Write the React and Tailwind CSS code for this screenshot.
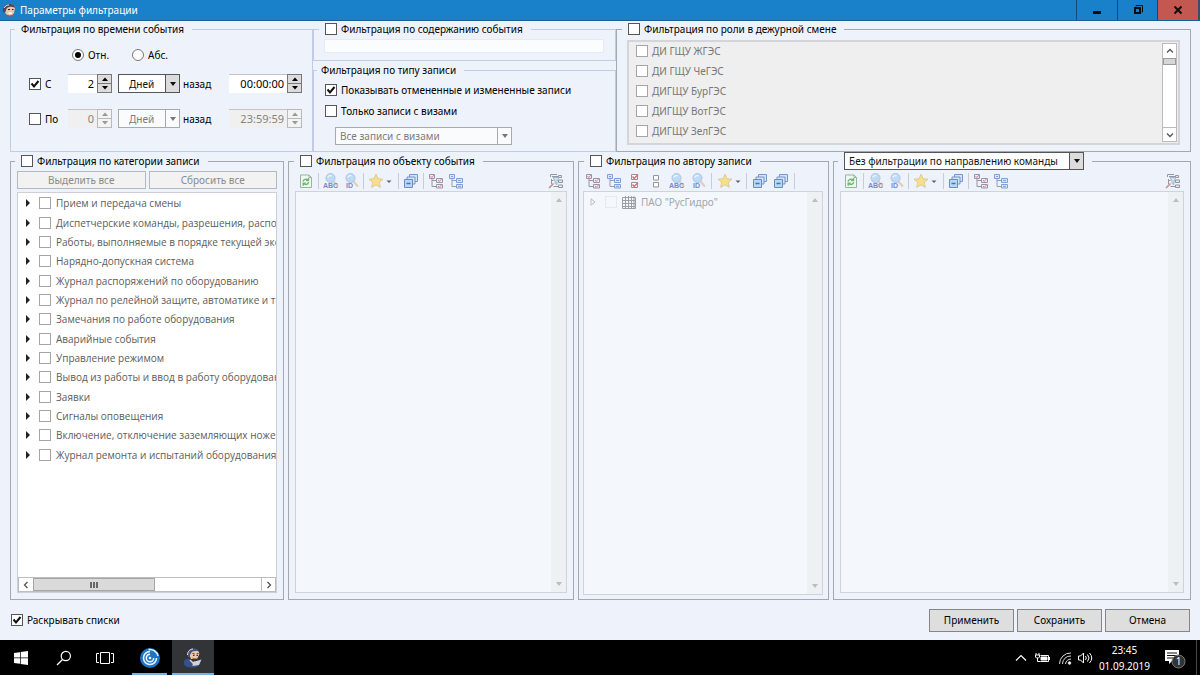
import React from 'react';

const CATEGORIES = [
  'Прием и передача смены',
  'Диспетчерские команды, разрешения, распоряжения',
  'Работы, выполняемые в порядке текущей эксплуатации',
  'Нарядно-допускная система',
  'Журнал распоряжений по оборудованию',
  'Журнал по релейной защите, автоматике и телемеханике',
  'Замечания по работе оборудования',
  'Аварийные события',
  'Управление режимом',
  'Вывод из работы и ввод в работу оборудования',
  'Заявки',
  'Сигналы оповещения',
  'Включение, отключение заземляющих ножей',
  'Журнал ремонта и испытаний оборудования',
];

const ROLES = ['ДИ ГЩУ ЖГЭС', 'ДИ ГЩУ ЧеГЭС', 'ДИГЩУ БурГЭС', 'ДИГЩУ ВотГЭС', 'ДИГЩУ ЗелГЭС'];

function Check({ muted, faint, ...props }) {
  const border = faint ? 'border-[#e6eaee]' : muted ? 'border-[#a5a5a5]' : 'border-[#555]';
  return (
    <span className="grid size-3 shrink-0">
      <input
        type="checkbox"
        className={`peer col-start-1 row-start-1 m-0 size-3 appearance-none border ${border} ${faint ? 'bg-transparent' : 'bg-white'}`}
        {...props}
      />
      <svg viewBox="0 0 12 12" className="pointer-events-none invisible col-start-1 row-start-1 size-3 peer-checked:visible" fill="none" stroke="#111" strokeWidth="2">
        <path d="M2.5 5.5 5 8.5 9.5 3" />
      </svg>
    </span>
  );
}

function CheckLabel({ children, className = 'gap-1', ...props }) {
  return (
    <label className={`flex items-center whitespace-nowrap ${className}`}>
      <Check {...props} />
      <span>{children}</span>
    </label>
  );
}

function Radio({ children, ...props }) {
  return (
    <label className="flex items-center gap-1">
      <span className="grid size-3">
        <input type="radio" name="time-mode" className="peer col-start-1 row-start-1 m-0 size-3 appearance-none rounded-full border border-[#777] bg-white" {...props} />
        <span className="pointer-events-none invisible col-start-1 row-start-1 size-1.5 place-self-center rounded-full bg-black peer-checked:visible" />
      </span>
      {children}
    </label>
  );
}

function Spinner({ label, value, width, disabled }) {
  const btn = disabled
    ? 'border-[#b9b9b9] bg-[#f3f3f3] text-[#999]'
    : 'border-[#777] bg-[#dcdcdc] text-black';
  return (
    <div className={`flex h-[19px] ${width}`}>
      <input
        type="text"
        aria-label={label}
        defaultValue={value}
        disabled={disabled}
        className={`min-w-0 flex-1 border-t border-[#c4c4c4] pr-[3px] text-right text-[11px] leading-[18px] ${disabled ? 'bg-[#f0f0f0] text-[#838383]' : 'bg-white text-black'}`}
      />
      <div className="flex w-[15px] flex-col">
        <button aria-label={`${label}: больше`} disabled={disabled} className={`grid flex-1 place-items-center border ${btn}`}>
          <svg viewBox="0 0 8 4" className="h-1 w-2"><path d="M1 4 4 .5 7 4z" fill="currentColor" /></svg>
        </button>
        <button aria-label={`${label}: меньше`} disabled={disabled} className={`grid flex-1 place-items-center border border-t-0 ${btn}`}>
          <svg viewBox="0 0 8 4" className="h-1 w-2"><path d="M1 0 4 3.5 7 0z" fill="currentColor" /></svg>
        </button>
      </div>
    </div>
  );
}

function Select({ label, value, className, textClass, disabled }) {
  const border = disabled ? 'border-[#a9a9a9]' : 'border-[#555]';
  return (
    <div className={`grid border ${border} ${disabled ? 'bg-[#fafbfc]' : 'bg-white'} ${className}`}>
      <select aria-label={label} disabled={disabled} className={`col-start-1 row-start-1 w-full appearance-none bg-transparent opacity-100 ${disabled ? 'text-[#7c7c7c]' : 'text-[#111]'} ${textClass}`}>
        <option>{value}</option>
      </select>
      <span className={`pointer-events-none col-start-1 row-start-1 grid w-[14px] place-items-center justify-self-end border-l ${border} ${disabled ? '' : 'bg-[#dcdcdc]'}`}>
        <svg viewBox="0 0 6 4" className="h-1 w-1.5"><path d="M0 0H6L3 4z" fill={disabled ? '#777' : '#111'} /></svg>
      </span>
    </div>
  );
}

function Group({ legend, tone = 'border-[#a3a9b3]', legendClass = 'h-4', className = '', children }) {
  return (
    <fieldset className={`flex min-w-0 flex-col border ${tone} ${className}`}>
      <legend className={`flex items-center whitespace-nowrap pr-2 ${legendClass}`}>{legend}</legend>
      {children}
    </fieldset>
  );
}

/* Toolbar icons */

function Icon({ children }) {
  return <svg viewBox="0 0 16 16" className="size-4" fill="none">{children}</svg>;
}

const RefreshIcon = () => (
  <Icon>
    <path d="M2.500 2h8.500l2.500 2.500V14.500h-11z" fill="#f1f8f1" stroke="#8fae91" />
    <path d="M11 2v2.500h2.500" stroke="#8fae91" />
    <path d="M5 8.500C5.500 6.300 8.200 5.500 10 7M10.500 5v2.500H8M10.700 9.300c-.6 2.200-3.300 2.900-5.100 1.300M5.200 12.800v-2.500h2.500" stroke="#62b266" strokeWidth="1.400" />
  </Icon>
);

const FindIcon = ({ text }) => (
  <Icon>
    <path d="m10 8 5 5.500" stroke="#e0cda4" strokeWidth="2" />
    <circle cx="7.500" cy="5" r="4.500" fill="#b9d9f6" stroke="#a6c1e6" />
    <path d="M4.800 4.500C5.300 3 6.800 2.300 8.500 2.800" stroke="#eef8ff" strokeWidth="1.400" />
    <text x={text === 'ID' ? 3 : 0} y="15" fontSize="7" fontWeight="bold" fill="#7079cc" fontFamily="Liberation Sans, sans-serif">{text}</text>
  </Icon>
);

const StarIcon = () => (
  <svg viewBox="0 0 24 16" className="h-4 w-6" fill="none">
    <path d="m8 1.200 2 4.600 5 .4-3.800 3.300 1.200 4.900L8 11.800l-4.400 2.600 1.200-4.900L1 6.200l5-.4z" fill="#f8df7d" stroke="#dcc78f" />
    <path d="M18.500 7.500h5L21 10z" fill="#555" />
  </svg>
);

const WindowsIcon = () => (
  <Icon>
    <path d="M6.500 1.500h8v7h-8z" fill="#cfe2fb" stroke="#6a8cc9" />
    <path d="M4 4h8v7H4z" fill="#cfe2fb" stroke="#6a8cc9" />
    <path d="M1.500 6.500h8v8h-8z" fill="#b4d3fa" stroke="#5a80c4" />
    <path d="M3.500 10.500h4" stroke="#3a61ab" strokeWidth="1.500" />
  </Icon>
);

const TreeIcon = () => (
  <Icon>
    <path d="M4 5v8.500h4.500M4 7.500h4.500" stroke="#8c97a8" />
    <path d="M1.500 1.500h5v4h-5zM8.500 5.500h6v4h-6zM8.500 11.500h6v3.500h-6z" fill="#d6e6fb" stroke="#7297d6" />
    <path d="M3 3.500h2M10 7.500h3M10 13.300h3" stroke="#7297d6" />
  </Icon>
);

const CheckedTreeIcon = () => (
  <Icon>
    <path d="M4 5v8.500h4.500M4 7.500h4.500" stroke="#8c8c98" />
    <path d="M1.500 1.500h5v4h-5zM8.500 5.500h6v4h-6zM8.500 11.500h6v3.500h-6z" fill="#f4eaf1" stroke="#8f8aa4" />
    <path d="m2.500 3 1.300 1.500L6 2M10 7l1.300 1.500L13.500 6M10 13l1.300 1.300L13.500 12" stroke="#cf7a85" />
  </Icon>
);

const CheckAllIcon = () => (
  <Icon>
    <path d="M4.500 1.500h6v5h-6zM4.500 9.500h6v5h-6z" fill="#fff" stroke="#8b8b8b" />
    <path d="m5.500 3.500 1.700 2L11 1.500M5.500 11.500l1.700 2L11 9.500" stroke="#d9626b" strokeWidth="1.500" />
  </Icon>
);

const UncheckAllIcon = () => (
  <Icon><path d="M5.500 2.500h5v4.500h-5zM5.500 9.500h5V14h-5z" fill="#fff" stroke="#8b8b8b" /></Icon>
);

const FilterTreeIcon = () => (
  <Icon>
    <path d="M2.500 4V1.500H9M4 3.500h6M3.500 6v5M3.500 7.500h2" stroke="#8b9098" />
    <path d="M10.500 2.500h3v2h-3zM10.500 7h4v2.500h-4zM10.500 12h4v2.500h-4z" fill="#e9eaec" stroke="#868b93" />
    <path d="M5 4.500h6L9 8v3.500l-2-1V8z" fill="#cfe3f3" stroke="#9bb0c4" />
    <path d="m1 15 4.500-4.500" stroke="#c08a82" strokeWidth="1.700" />
    <path d="M5.500 13.500h5" stroke="#868b93" />
  </Icon>
);

function Tool({ label, children, size = 'w-4' }) {
  return <button aria-label={label} className={`flex h-4 shrink-0 items-center opacity-90 ${size}`}>{children}</button>;
}

const Divider = () => <span className="h-4 w-px shrink-0 bg-[#c9ccd2]" />;

function ObjectToolbar() {
  return (
    <div className="flex h-[21px] items-center gap-1 px-[3px]">
      <Tool label="Обновить"><RefreshIcon /></Tool>
      <Divider />
      <Tool label="Поиск по тексту"><FindIcon text="ABC" /></Tool>
      <Tool label="Поиск по ID"><FindIcon text="ID" /></Tool>
      <Divider />
      <Tool label="Избранное" size="w-[26px]"><StarIcon /></Tool>
      <Divider />
      <Tool label="Окна"><WindowsIcon /></Tool>
      <Divider />
      <Tool label="Выбрать ветвь"><CheckedTreeIcon /></Tool>
      <Tool label="Снять ветвь"><TreeIcon /></Tool>
      <span className="flex-1" />
      <Tool label="Фильтр дерева"><FilterTreeIcon /></Tool>
    </div>
  );
}

function AuthorToolbar() {
  return (
    <div className="flex h-[21px] items-center gap-[5px] pl-0.5">
      <Tool label="Выбрать ветвь"><CheckedTreeIcon /></Tool>
      <Tool label="Снять ветвь"><TreeIcon /></Tool>
      <Tool label="Отметить все"><CheckAllIcon /></Tool>
      <Tool label="Снять все"><UncheckAllIcon /></Tool>
      <Tool label="Поиск по тексту"><FindIcon text="ABC" /></Tool>
      <Tool label="Поиск по ID"><FindIcon text="ID" /></Tool>
      <Divider />
      <Tool label="Избранное" size="w-6"><StarIcon /></Tool>
      <Divider />
      <Tool label="Развернуть"><WindowsIcon /></Tool>
      <Tool label="Свернуть"><WindowsIcon /></Tool>
      <Divider />
    </div>
  );
}

function TreePane({ children }) {
  return (
    <div className="flex min-h-0 flex-1 border border-[#cfd4da] bg-[#f4f8fc]">
      <div className="min-w-0 flex-1">{children}</div>
      <div className="flex w-[15px] flex-col items-center justify-between bg-[#eef1f4] py-1.5">
        <svg viewBox="0 0 6 4" className="h-1 w-1.5"><path d="M0 4H6L3 0z" fill="#b9bdc2" /></svg>
        <svg viewBox="0 0 6 4" className="h-1 w-1.5"><path d="M0 0H6L3 4z" fill="#b9bdc2" /></svg>
      </div>
    </div>
  );
}

function Chevron({ d }) {
  return <svg viewBox="0 0 8 8" className="size-2" fill="none" stroke="#555" strokeWidth="1.300"><path d={d} /></svg>;
}

function Mascot({ className }) {
  return (
    <svg viewBox="0 0 20 20" className={className}>
      <path d="M1 15c0-3 2-5 5-4l5 3 5 1c1 2-1 4.500-6 4.500S1 18.500 1 15z" fill="#34508e" />
      <path d="M6 6c0-3 3-4 6-4s5 2 4 5l-2 4H8z" fill="#efc9a8" />
      <path d="M5 9C3.500 4 6 .5 10.500.5c3 0 5 1 5.500 3-4-.8-7-.5-8 2-1 1-1 2.500-1.500 4z" fill="#4d5680" />
      <path d="M4.500 7C4.500 3.500 7 1 10 1" stroke="#dfe5f2" fill="none" />
      <path d="M9.500 5.500l2 .5M13.500 6l2-.5M10 7.500h1.500M13.500 7.500H15" stroke="#332a2a" fill="none" />
      <path d="M9.500 10c1.500 1 2.500 1 4 .3" stroke="#8b4233" fill="none" />
      <path d="m10 14 8.500-2.500-2.500 5.500-6.500 1z" fill="#c9d4e4" />
      <path d="m7 12 3 3 2-1" stroke="#efc9a8" strokeWidth="1.500" fill="none" />
    </svg>
  );
}

function TitleBar() {
  return (
    <header className="flex h-[21px] shrink-0 items-stretch border-b border-[#14609a] bg-[#1881ca]">
      <div className="flex flex-1 items-center gap-1 pl-0.5">
        <svg viewBox="0 0 14 14" className="size-3.5">
          <path d="M2 8C1 4 4 1 8 1c4 0 5 2 5 4l-1 5c-1 3-6 3-8 1z" fill="#e9c5aa" />
          <path d="M1 9C0 4 3 1 7 1c4-.5 6 1 6 4-3-2-6-1-8 0-1 1-1 3-2 5z" fill="#464a5c" />
          <path d="M2 5c1-2 3-3 5-3" stroke="#e8edf6" fill="none" />
          <path d="M6 6.500h2M10 6.500h1.500" stroke="#222" />
          <path d="M2 10c2 3 7 4 10 1l-1 2c-3 1-7 1-9-3z" fill="#c4473d" />
          <path d="M6 9.500h4v1.300H7z" fill="#fff" />
        </svg>
        <h1 className="font-normal text-white">Параметры фильтрации</h1>
      </div>
      <div className="flex border-l border-[#0f4a78]">
        <button aria-label="Свернуть окно" className="grid w-[41px] place-items-center border-r border-[#0f4a78]">
          <svg viewBox="0 0 12 12" className="size-3"><path d="M2 7h8v3H2z" fill="#0b0f14" /></svg>
        </button>
        <button aria-label="Восстановить окно" className="grid w-10 place-items-center border-r border-[#0f4a78]">
          <svg viewBox="0 0 12 12" className="size-3" fill="none" stroke="#0b0f14"><path d="M4 2.500V1.500h6.500V8H9.500" /><path d="M3 4h5v5H3z" strokeWidth="2" /></svg>
        </button>
        <button aria-label="Закрыть" className="grid w-10 place-items-center bg-[#c25850]">
          <svg viewBox="0 0 12 12" className="size-3" fill="none" stroke="#150c0c" strokeWidth="2"><path d="m2.500 2.500 7 7M9.500 2.500l-7 7" /></svg>
        </button>
        <span className="w-0.5 bg-[#3c4f66]" />
      </div>
    </header>
  );
}

function TimeRow({ label, count, time, disabled, ...check }) {
  return (
    <div className="flex items-center">
      <CheckLabel className="w-[39px] gap-1" {...check}>{label}</CheckLabel>
      <Spinner label={`${label}, количество`} value={count} width="w-11" disabled={disabled} />
      <Select label={`${label}, единица`} value="Дней" className="ml-1.5 h-[19px] w-[62px]" textClass="pl-2.5" disabled={disabled} />
      <span className="ml-[3px] flex-1">назад</span>
      <Spinner label={`${label}, время`} value={time} width="w-[73px]" disabled={disabled} />
    </div>
  );
}

function TimeGroup() {
  return (
    <Group legend="Фильтрация по времени события" tone="border-[#c3cae4]" legendClass="h-4 ml-1 pl-1.5">
      <div className="flex flex-col pl-[18px] pr-2.5 pt-2.5">
        <div className="mb-[11px] flex h-4 items-center gap-[23px] pl-[43px]">
          <Radio defaultChecked>Отн.</Radio>
          <Radio>Абс.</Radio>
        </div>
        <div className="flex flex-col gap-4">
          <TimeRow label="С" count="2" time="00:00:00" defaultChecked />
          <TimeRow label="По" count="0" time="23:59:59" disabled />
        </div>
      </div>
    </Group>
  );
}

function RoleGroup() {
  return (
    <Group legend={<CheckLabel>Фильтрация по роли в дежурной смене</CheckLabel>} legendClass="h-4 ml-[5px] pl-1.5">
      <div className="mx-2.5 mb-1.5 mt-[3px] flex min-h-0 flex-1 border-2 border-[#d3d5d8] bg-[#efefef] p-px">
        <ul className="flex flex-1 flex-col gap-1 pl-1.5 text-[#777]">
          {ROLES.map((r) => (
            <li key={r}><CheckLabel muted disabled>{r}</CheckLabel></li>
          ))}
        </ul>
        <div className="flex w-[15px] flex-col border border-[#bbb] bg-white">
          <button aria-label="Прокрутить вверх" className="grid h-3.5 place-items-center"><Chevron d="M1 5.500 4 2.500 7 5.500" /></button>
          <span className="h-[7px] border border-[#9c9c9c] bg-[#d6d6d6]" />
          <span className="flex-1" />
          <button aria-label="Прокрутить вниз" className="grid h-3.5 place-items-center border-t border-[#bbb]"><Chevron d="M1 2.500 4 5.500 7 2.500" /></button>
        </div>
      </div>
    </Group>
  );
}

function CategoryGroup() {
  return (
    <Group legend={<CheckLabel>Фильтрация по категории записи</CheckLabel>} legendClass="h-[18px] ml-1 pl-1.5" className="pb-1.5">
      <div className="flex min-h-0 flex-1 flex-col px-1.5 pt-px">
        <div className="mb-[3px] grid grid-cols-2 gap-[3px] text-[#8a8a8a]">
          <button className="h-[18px] border border-[#b5b8bc] bg-[#f2f2f2]">Выделить все</button>
          <button className="h-[18px] border border-[#b5b8bc] bg-[#f2f2f2]">Сбросить все</button>
        </div>
        <div className="flex min-h-0 flex-1 flex-col border border-[#ccd0d6] bg-white">
          <ul className="min-h-0 flex-1 overflow-hidden pl-2 font-['Open_Sans','Noto_Sans',sans-serif] text-[#5c5c5c]">
            {CATEGORIES.map((c, i) => (
              <li key={c} className={`flex items-center gap-[9px] overflow-hidden ${i % 3 === 0 ? 'h-5' : 'h-[19px]'}`}>
                <svg viewBox="0 0 4 8" className="h-2 w-1 shrink-0"><path d="M0 0 4 4 0 8z" fill="#222" /></svg>
                <CheckLabel muted className="gap-[5px]">{c}</CheckLabel>
              </li>
            ))}
          </ul>
          <div className="flex h-[15px] border border-[#bdbdbd] bg-white">
            <button aria-label="Прокрутить влево" className="grid w-3.5 place-items-center"><Chevron d="M5.500 1 2.500 4 5.500 7" /></button>
            <span className="grid w-[122px] place-items-center border border-[#a6a6a6] bg-[#dadada]">
              <svg viewBox="0 0 8 6" className="h-1.5 w-2" stroke="#444" strokeWidth="1.500"><path d="M1 0v6M4 0v6M7 0v6" /></svg>
            </span>
            <span className="flex-1" />
            <button aria-label="Прокрутить вправо" className="grid w-3.5 place-items-center border-l border-[#bdbdbd]"><Chevron d="M2.500 1 5.500 4 2.500 7" /></button>
          </div>
        </div>
      </div>
    </Group>
  );
}

function AuthorGroup() {
  return (
    <Group legend={<CheckLabel>Фильтрация по автору записи</CheckLabel>} legendClass="h-[18px] ml-[5px] pl-1.5" className="pb-1">
      <div className="flex min-h-0 flex-1 flex-col pl-1 pr-[5px]">
        <AuthorToolbar />
        <TreePane>
          <div className="flex h-5 items-center gap-[9px] pl-1.5 text-[#a3a7ac]">
            <svg viewBox="0 0 6 8" className="h-2 w-1.5" fill="none" stroke="#b9bdc3"><path d="M1 .800 5 4 1 7.200z" /></svg>
            <label className="flex items-center gap-[5px]">
              <Check faint disabled />
              <svg viewBox="0 0 14 14" className="size-3.5" fill="none" stroke="#9b9fa3">
                <path d="M.5 2.500h13v11H.5zM1 5.500h12M1 8.500h12M1 11.500h12M3.500 1v12M6.500 1v12M9.500 1v12M12 1v12" />
              </svg>
              ПАО "РусГидро"
            </label>
          </div>
        </TreePane>
      </div>
    </Group>
  );
}

function TaskBar() {
  return (
    <footer className="flex h-[35px] shrink-0 items-stretch bg-black text-white">
      <nav aria-label="Панель задач" className="flex">
        <button aria-label="Пуск" className="grid w-[42px] place-items-center">
          <svg viewBox="0 0 14 14" className="size-3.5" fill="#fff"><path d="M0 2 6 1.200V6.600H0zM6.700 1.100 14 0v6.600H6.700zM0 7.300h6v5.500L0 12zM6.700 7.300H14V14L6.700 12.900z" /></svg>
        </button>
        <button aria-label="Поиск" className="grid w-[43px] place-items-center">
          <svg viewBox="0 0 16 16" className="size-4" fill="none" stroke="#fff" strokeWidth="1.200"><circle cx="9.800" cy="6" r="4.600" /><path d="M6.500 9.500 1 15" /></svg>
        </button>
        <button aria-label="Представление задач" className="grid w-10 place-items-center">
          <svg viewBox="0 0 18 14" className="h-3.5 w-[18px]" fill="none" stroke="#fff"><path d="M4.500 1.500h9v11h-9zM3 2.500H.5v9H3M15 2.500h2.500v9H15" /></svg>
        </button>
        <button aria-label="Receiver" className="ml-[7px] grid w-[35px] place-items-center border-b-2 border-t-2 border-b-[#76b1ea] border-t-transparent">
          <svg viewBox="0 0 20 20" className="size-5" fill="none">
            <circle cx="10" cy="10" r="10" fill="#1d76c4" />
            <path d="M10 3.500A6.500 6.500 0 1 0 16.500 10M10 6.300A3.700 3.700 0 1 0 13.700 10M8.500 1.500A8.500 8.500 0 0 1 18 8" stroke="#eaf5ff" strokeWidth="1.500" />
            <circle cx="10" cy="10" r="1.300" fill="#fff" />
          </svg>
        </button>
        <button aria-label="Журнал" className="ml-[5px] grid w-[42px] place-items-center border-b-2 border-t-2 border-b-[#76b1ea] border-t-[#333438] bg-[#333438]"><Mascot className="size-5" /></button>
      </nav>
      <div className="flex-1" />
      <div className="flex items-center">
        <svg viewBox="0 0 12 12" className="mr-2 size-3" fill="none" stroke="#fff" strokeWidth="1.200"><path d="M1 8.500 6 3.500l5 5" /></svg>
        <svg viewBox="0 0 16 12" className="mr-[7px] h-3 w-4" fill="none" stroke="#fff">
          <path d="M5.500 3.500h8v6h-8" /><path d="M6 5h6v3H6z" fill="#fff" /><path d="M14.500 5v3M1 1v2M4 1v2M.5 3h4v2l-1 1h-2l-1-1zM2.500 6v3.500h3" />
        </svg>
        <svg viewBox="0 0 14 14" className="mr-[5px] size-3.5" fill="none" stroke="#ddd">
          <path d="M1.500 13A11 11 0 0 1 13 2M4.500 13A8 8 0 0 1 13 5M7.500 13A5.500 5.500 0 0 1 13 8" /><circle cx="11.500" cy="12" r="1.300" fill="#fff" />
        </svg>
        <svg viewBox="0 0 16 14" className="mr-1.5 h-3.5 w-4" fill="none" stroke="#fff">
          <path d="M1.500 5h2L6.500 2v10l-3-3h-2zM8.500 5q1.500 2 0 4M10.500 3.500q3 3.500 0 7M12.500 2q4.500 5 0 10" />
        </svg>
        <div className="text-center">
          <div>23:45</div>
          <div>01.09.2019</div>
        </div>
        <svg viewBox="0 0 22 22" className="ml-3.5 mr-2.5 size-[22px]">
          <path d="M1 3h14v11H8l-3 3v-3H1z" fill="#fff" />
          <path d="M3 6h10M3 8.500h10M3 11h7" stroke="#111" />
          <circle cx="14.500" cy="14.500" r="6.500" fill="#333" stroke="#777" />
          <text x="14.500" y="18" textAnchor="middle" fontSize="10" fill="#fff" fontFamily="Noto Sans, sans-serif">1</text>
        </svg>
        <span className="mr-[3px] h-full w-px bg-[#444]" />
      </div>
    </footer>
  );
}

function ObjectGroup({ legend, legendClass }) {
  return (
    <Group legend={legend} legendClass={legendClass} className="pb-1.5">
      <div className="flex min-h-0 flex-1 flex-col px-1.5">
        <ObjectToolbar />
        <TreePane />
      </div>
    </Group>
  );
}

export default function App() {
  const action = 'h-[23px] w-[85px] border border-[#858585] bg-[#dedede] text-black';
  return (
    <div className="flex h-screen min-h-[560px] min-w-[1000px] flex-col bg-[#eef2fa] font-['Noto_Sans','Open_Sans',sans-serif] text-[10px] leading-4 text-black">
      <TitleBar />
      <main className="flex min-h-0 flex-1 flex-col pl-2.5 pr-[9px]">
        <div className="grid h-[131px] shrink-0 grid-cols-[303fr_303fr_575fr]">
          <TimeGroup />
          <div className="flex min-w-0 flex-col">
            <Group legend={<CheckLabel>Фильтрация по содержанию события</CheckLabel>} tone="border-[#c3cae4]" legendClass="h-4 ml-[5px] pl-1.5" className="h-10">
              <input type="text" aria-label="Содержание события" disabled className="ml-2.5 mr-[11px] mt-[2px] h-3.5 border border-[#e6eaf2] bg-[#fafcfe]" />
            </Group>
            <Group legend="Фильтрация по типу записи" tone="border-[#c3cae4]" legendClass="h-4 ml-[3px] pl-1" className="mt-px flex-1">
              <div className="flex flex-col gap-[5px] pl-[11px] pt-1">
                <CheckLabel defaultChecked>Показывать отмененные и измененные записи</CheckLabel>
                <CheckLabel>Только записи с визами</CheckLabel>
                <Select label="Визы" value="Все записи с визами" className="ml-2.5 mt-[3px] h-[18px] w-[177px]" textClass="pl-1" disabled />
              </div>
            </Group>
          </div>
          <RoleGroup />
        </div>
        <div className="grid min-h-0 flex-1 grid-cols-[274fr_286fr_251fr_358fr] gap-1">
          <CategoryGroup />
          <ObjectGroup legend={<CheckLabel>Фильтрация по объекту события</CheckLabel>} legendClass="h-[18px] ml-[5px] pl-1.5" />
          <AuthorGroup />
          <ObjectGroup
            legend={<Select label="Направление команды" value="Без фильтрации по направлению команды" className="h-[18px] w-[240px]" textClass="pl-1" />}
            legendClass="h-[18px] ml-1 pl-1.5"
          />
        </div>
        <div className="flex h-10 shrink-0 items-center justify-between px-px">
          <CheckLabel defaultChecked>Раскрывать списки</CheckLabel>
          <div className="flex gap-[3px]">
            <button className={action}>Применить</button>
            <button className={action}>Сохранить</button>
            <button className={action}>Отмена</button>
          </div>
        </div>
      </main>
      <TaskBar />
    </div>
  );
}
